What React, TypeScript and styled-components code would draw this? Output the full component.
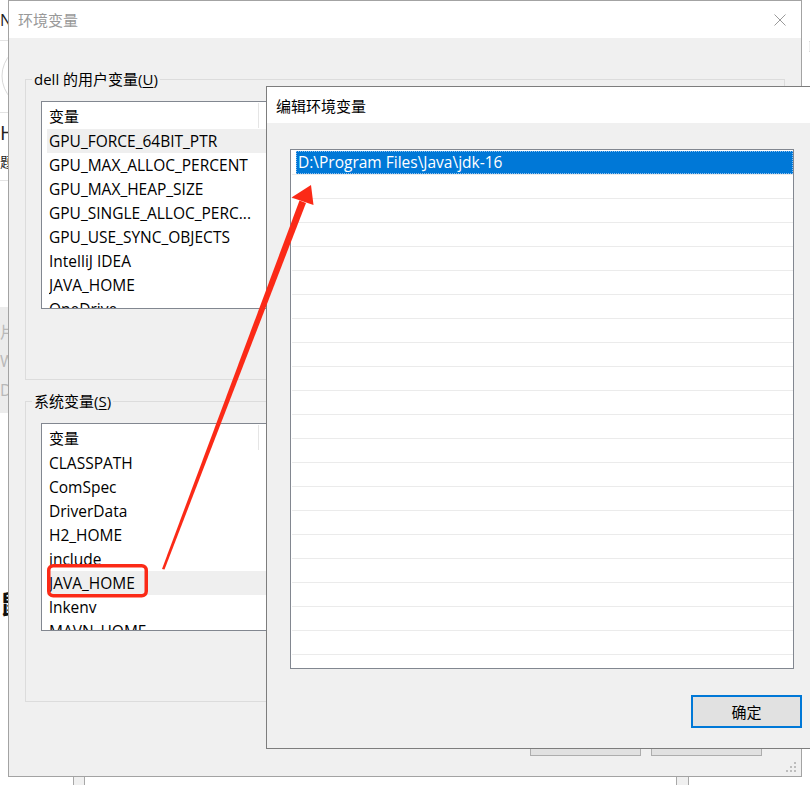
import React from 'react';
import styled, { createGlobalStyle } from 'styled-components';

const UI_FONT = '"Open Sans", "Noto Sans CJK SC", sans-serif';

const GlobalStyle = createGlobalStyle`
  html, body {
    margin: 0;
    padding: 0;
    background: #fff;
  }
  body {
    font-family: ${UI_FONT};
    overflow: hidden;
  }
`;

const Desktop = styled.div`
  position: relative;
  display: flex;
  width: 810px;
  height: 785px;
  overflow: hidden;
  background: #fff;
`;

/* ---------- the app behind the dialogs ---------- */

const LeftStrip = styled.div`
  display: flex;
  flex-direction: column;
  width: 8px;
  flex-shrink: 0;
  overflow: hidden;
`;

const StripCell = styled.div<{ $h: number; $size?: number; $color?: string; $bold?: boolean; $line?: boolean }>`
  height: ${p => p.$h}px;
  flex-shrink: 0;
  box-sizing: border-box;
  font-size: ${p => p.$size ?? 14}px;
  line-height: ${p => p.$h}px;
  font-weight: ${p => (p.$bold ? 700 : 400)};
  color: ${p => p.$color ?? '#222'};
  border-bottom: ${p => (p.$line ? '1px solid #e3e3e3' : 'none')};
  white-space: nowrap;
`;

const FadedBand = styled.div`
  display: flex;
  flex-direction: column;
  justify-content: space-around;
  height: 106px;
  flex-shrink: 0;
  padding: 8px 0;
  box-sizing: border-box;
  background: #ececec;
  color: #b8b8b8;
  font-size: 16px;
  white-space: nowrap;
`;

const Middle = styled.div`
  display: flex;
  flex: 1;
  flex-direction: column;
`;

const BottomBar = styled.div`
  display: flex;
  height: 8px;
  margin-top: auto;
`;

const BottomPart = styled.div<{ $w: number; $bg: string; $edge?: boolean }>`
  width: ${p => p.$w}px;
  flex-shrink: 0;
  background: ${p => p.$bg};
  border-left: ${p => (p.$edge ? '1px solid #a8a8a8' : 'none')};
`;

const RightStrip = styled.div`
  display: flex;
  flex-direction: column;
  width: 8px;
  flex-shrink: 0;
  overflow: hidden;
`;

const GrayBand = styled.div`
  height: 11px;
  margin-top: 14px;
  box-sizing: border-box;
  background: #f0f0f0;
  border-top: 1px solid #dadada;
  border-bottom: 1px solid #dadada;
`;

/* ---------- windows ---------- */

const Window = styled.div<{ $x: number; $y: number; $w: number; $h: number; $frame: string }>`
  position: absolute;
  left: ${p => p.$x}px;
  top: ${p => p.$y}px;
  width: ${p => p.$w}px;
  height: ${p => p.$h}px;
  box-sizing: border-box;
  display: flex;
  flex-direction: column;
  border: 1px solid ${p => p.$frame};
  background: #f0f0f0;
  overflow: hidden;
`;

const TitleBar = styled.div<{ $h: number; $dim?: boolean }>`
  display: flex;
  align-items: center;
  justify-content: space-between;
  height: ${p => p.$h}px;
  flex-shrink: 0;
  padding: 0 15px 0 9px;
  background: #fff;
  color: ${p => (p.$dim ? '#999' : '#000')};
  font-size: 15px;
`;

const MainBody = styled.div`
  display: flex;
  flex: 1;
  flex-direction: column;
  padding: 31px 16px 0;
`;

const Group = styled.fieldset<{ $gap?: number }>`
  margin: ${p => p.$gap ?? 0}px 0 0;
  padding: 12px 15px 22px;
  min-width: 0;
  border: 1px solid #dcdcdc;
`;

const Legend = styled.legend`
  margin-left: -9px;
  padding: 0 2px;
  font-size: 15px;
  line-height: 20px;
  color: #000;

  u {
    text-decoration-thickness: 1px;
    text-underline-offset: 2px;
  }
`;

const ListView = styled.div`
  height: 208px;
  box-sizing: border-box;
  border: 1px solid #828790;
  background: #fff;
  overflow: hidden;
`;

const ListHeader = styled.div`
  display: grid;
  grid-template-columns: 217px 1fr;
  height: 27px;
  font-size: 15px;
`;

const HeaderCell = styled.div<{ $divider?: boolean }>`
  display: flex;
  align-items: center;
  padding-left: 7px;
  margin: 1px 0;
  border-right: ${p => (p.$divider ? '1px solid #e5e5e5' : 'none')};
`;

const Row = styled.div<{ $active?: boolean }>`
  display: grid;
  grid-template-columns: 212px 1fr;
  height: 24px;
  margin-left: 5px;
  padding-left: 2px;
  background: ${p => (p.$active ? '#efefef' : 'transparent')};
  font-size: 15.5px;
  line-height: 24px;
  color: #000;
  white-space: nowrap;
`;

const Cell = styled.span<{ $value?: boolean }>`
  overflow: hidden;
  padding-left: ${p => (p.$value ? 12 : 0)}px;
`;

const ButtonRow = styled.div<{ $pad?: number; $top?: number }>`
  display: flex;
  justify-content: flex-end;
  gap: 10px;
  margin-top: ${p => p.$top ?? 16}px;
  padding-right: ${p => p.$pad ?? 0}px;
`;

const Button = styled.button<{ $primary?: boolean; $h?: number }>`
  width: 111px;
  height: ${p => p.$h ?? 32}px;
  flex-shrink: 0;
  box-sizing: border-box;
  padding: 0;
  border: ${p => (p.$primary ? '2px solid #0078d7' : '1px solid #adadad')};
  background: #e1e1e1;
  color: #000;
  font-family: ${UI_FONT};
  font-size: 15px;
`;

const Grip = styled.svg`
  position: absolute;
  right: 3px;
  bottom: 2px;
`;

const EditBody = styled.div`
  display: flex;
  flex: 1;
  flex-direction: column;
  padding: 26px 0 0 23px;
`;

const EditTop = styled.div`
  display: flex;
  gap: 17px;
`;

const PathList = styled.div`
  width: 504px;
  height: 520px;
  flex-shrink: 0;
  box-sizing: border-box;
  padding-top: 1px;
  border: 1px solid #828790;
  background: #fff;
  overflow: hidden;
`;

const PathRow = styled.div`
  height: 24px;
  box-sizing: border-box;
  margin-left: 1px;
  border-bottom: 1px solid #ebebeb;
`;

const PathText = styled.div<{ $selected?: boolean }>`
  height: 23px;
  box-sizing: border-box;
  margin-left: 4px;
  padding-left: 2px;
  background: ${p => (p.$selected ? '#0078d7' : 'transparent')};
  outline: ${p => (p.$selected ? '1px dotted #8fc0ee' : 'none')};
  outline-offset: -1px;
  color: ${p => (p.$selected ? '#fff' : '#000')};
  font-size: 15.5px;
  line-height: 23px;
  white-space: nowrap;
`;

const SideButtons = styled.div`
  display: flex;
  flex-direction: column;
  gap: 10px;
`;

const Annotation = styled.svg`
  position: absolute;
  left: 0;
  top: 0;
  pointer-events: none;
`;

const CloseIcon = () => (
  <svg width="12" height="12" viewBox="0 0 12 12">
    <path d="M0.5 0.5 L11.5 11.5 M11.5 0.5 L0.5 11.5" stroke="#9a9a9a" strokeWidth="1" fill="none" />
  </svg>
);

const userVars = [
  ['GPU_FORCE_64BIT_PTR', '1'],
  ['GPU_MAX_ALLOC_PERCENT', '100'],
  ['GPU_MAX_HEAP_SIZE', '100'],
  ['GPU_SINGLE_ALLOC_PERC...', '100'],
  ['GPU_USE_SYNC_OBJECTS', '1'],
  ['IntelliJ IDEA', 'D:\\IntelliJ IDEA 2021.1\\bin;'],
  ['JAVA_HOME', 'D:\\Program Files\\Java\\jdk-16'],
  ['OneDrive', 'C:\\Users\\dell\\OneDrive'],
];

const sysVars = [
  ['CLASSPATH', '.;%JAVA_HOME%\\lib;'],
  ['ComSpec', 'C:\\Windows\\system32\\cmd.exe'],
  ['DriverData', 'C:\\Windows\\System32\\Drivers\\DriverData'],
  ['H2_HOME', 'D:\\h2'],
  ['include', 'C:\\MinGW\\include'],
  ['JAVA_HOME', 'D:\\Program Files\\Java\\jdk-16'],
  ['lnkenv', 'C:\\Program Files\\lnkenv'],
  ['MAVN_HOME', 'D:\\apache-maven-3.8.1'],
];

const VarList = ({ rows, active }: { rows: string[][]; active: number }) => (
  <ListView>
    <ListHeader>
      <HeaderCell $divider>变量</HeaderCell>
      <HeaderCell>值</HeaderCell>
    </ListHeader>
    {rows.map(([name, value], i) => (
      <Row key={name} $active={i === active}>
        <Cell>{name}</Cell>
        <Cell $value>{value}</Cell>
      </Row>
    ))}
  </ListView>
);

const App = () => {
  const pathRows = Array.from({ length: 22 }, (_, i) => i);

  return (
    <>
      <GlobalStyle />
      <Desktop>
        <LeftStrip>
          <StripCell $h={41} $size={16} $line>N</StripCell>
          <StripCell $h={72} $line>
            <svg width="8" height="71" viewBox="0 0 8 71">
              <circle cx="34" cy="35" r="32" fill="none" stroke="#d8d8d8" strokeWidth="1" />
            </svg>
          </StripCell>
          <StripCell $h={40} $size={20}>H</StripCell>
          <StripCell $h={18} $size={14}>题</StripCell>
          <StripCell $h={10} $line />
          <StripCell $h={126} />
          <FadedBand>
            <span>片</span>
            <span>W</span>
            <span>DI</span>
          </FadedBand>
          <StripCell $h={174} />
          <StripCell $h={34} $size={26} $bold $color="#111">鼠</StripCell>
        </LeftStrip>

        <Middle>
          <BottomBar>
            <BottomPart $w={65} $bg="#fff" />
            <BottomPart $w={10} $bg="#f0f0f0" $edge />
            <BottomPart $w={591} $bg="#fff" $edge />
            <BottomPart $w={11} $bg="#f0f0f0" $edge />
            <BottomPart $w={120} $bg="#fff" $edge />
          </BottomBar>
        </Middle>

        <RightStrip>
          <svg width="8" height="27" viewBox="0 0 8 27">
            <rect x="1.5" y="10.5" width="12" height="16" rx="1" fill="#fbd978" stroke="#e2b54c" />
          </svg>
          <GrayBand />
        </RightStrip>

        {/* 环境变量 */}
        <Window $x={8} $y={0} $w={794} $h={777} $frame="#a3a3a3">
          <TitleBar $h={37} $dim>
            <span>环境变量</span>
            <CloseIcon />
          </TitleBar>
          <MainBody>
            <Group>
              <Legend>dell 的用户变量(<u>U</u>)</Legend>
              <VarList rows={userVars} active={0} />
              <ButtonRow>
                <Button>新建(N)...</Button>
                <Button>编辑(E)...</Button>
                <Button>删除(D)</Button>
              </ButtonRow>
            </Group>
            <Group $gap={11}>
              <Legend>系统变量(<u>S</u>)</Legend>
              <VarList rows={sysVars} active={5} />
              <ButtonRow>
                <Button>新建(W)...</Button>
                <Button>编辑(I)...</Button>
                <Button>删除(L)</Button>
              </ButtonRow>
            </Group>
            <ButtonRow $top={22} $pad={23}>
              <Button>确定</Button>
              <Button>取消</Button>
            </ButtonRow>
          </MainBody>
          <Grip width="12" height="12" viewBox="0 0 12 12">
            <g fill="#bdbdbd">
              <rect x="8" y="0" width="2" height="2" />
              <rect x="4" y="4" width="2" height="2" />
              <rect x="8" y="4" width="2" height="2" />
              <rect x="0" y="8" width="2" height="2" />
              <rect x="4" y="8" width="2" height="2" />
              <rect x="8" y="8" width="2" height="2" />
            </g>
          </Grip>
        </Window>

        {/* 编辑环境变量 */}
        <Window $x={266} $y={86} $w={680} $h={663} $frame="#7d7d7d">
          <TitleBar $h={36}>
            <span>编辑环境变量</span>
            <CloseIcon />
          </TitleBar>
          <EditBody>
            <EditTop>
              <PathList>
                {pathRows.map(i => (
                  <PathRow key={i}>
                    <PathText $selected={i === 0}>{i === 0 ? 'D:\\Program Files\\Java\\jdk-16' : ''}</PathText>
                  </PathRow>
                ))}
              </PathList>
              <SideButtons>
                <Button>新建(N)</Button>
                <Button>编辑(E)</Button>
                <Button>浏览(B)...</Button>
                <Button>删除(D)</Button>
                <Button>上移(U)</Button>
                <Button>下移(O)</Button>
                <Button>编辑文本(T)...</Button>
              </SideButtons>
            </EditTop>
            <ButtonRow $top={26} $pad={22}>
              <Button $primary $h={33}>确定</Button>
              <Button $h={33}>取消</Button>
            </ButtonRow>
          </EditBody>
        </Window>

        <Annotation width="810" height="785" viewBox="0 0 810 785">
          <rect x="48.75" y="565.75" width="97.5" height="30" rx="4.5" fill="none" stroke="#fb2a17" strokeWidth="3.5" />
          <polygon points="162,569 164.5,569.5 306,203 299.5,200.5" fill="#fb2a17" />
          <polygon points="311,185 291.5,197.5 313.5,205" fill="#fb2a17" />
        </Annotation>
      </Desktop>
    </>
  );
};

export default App;
